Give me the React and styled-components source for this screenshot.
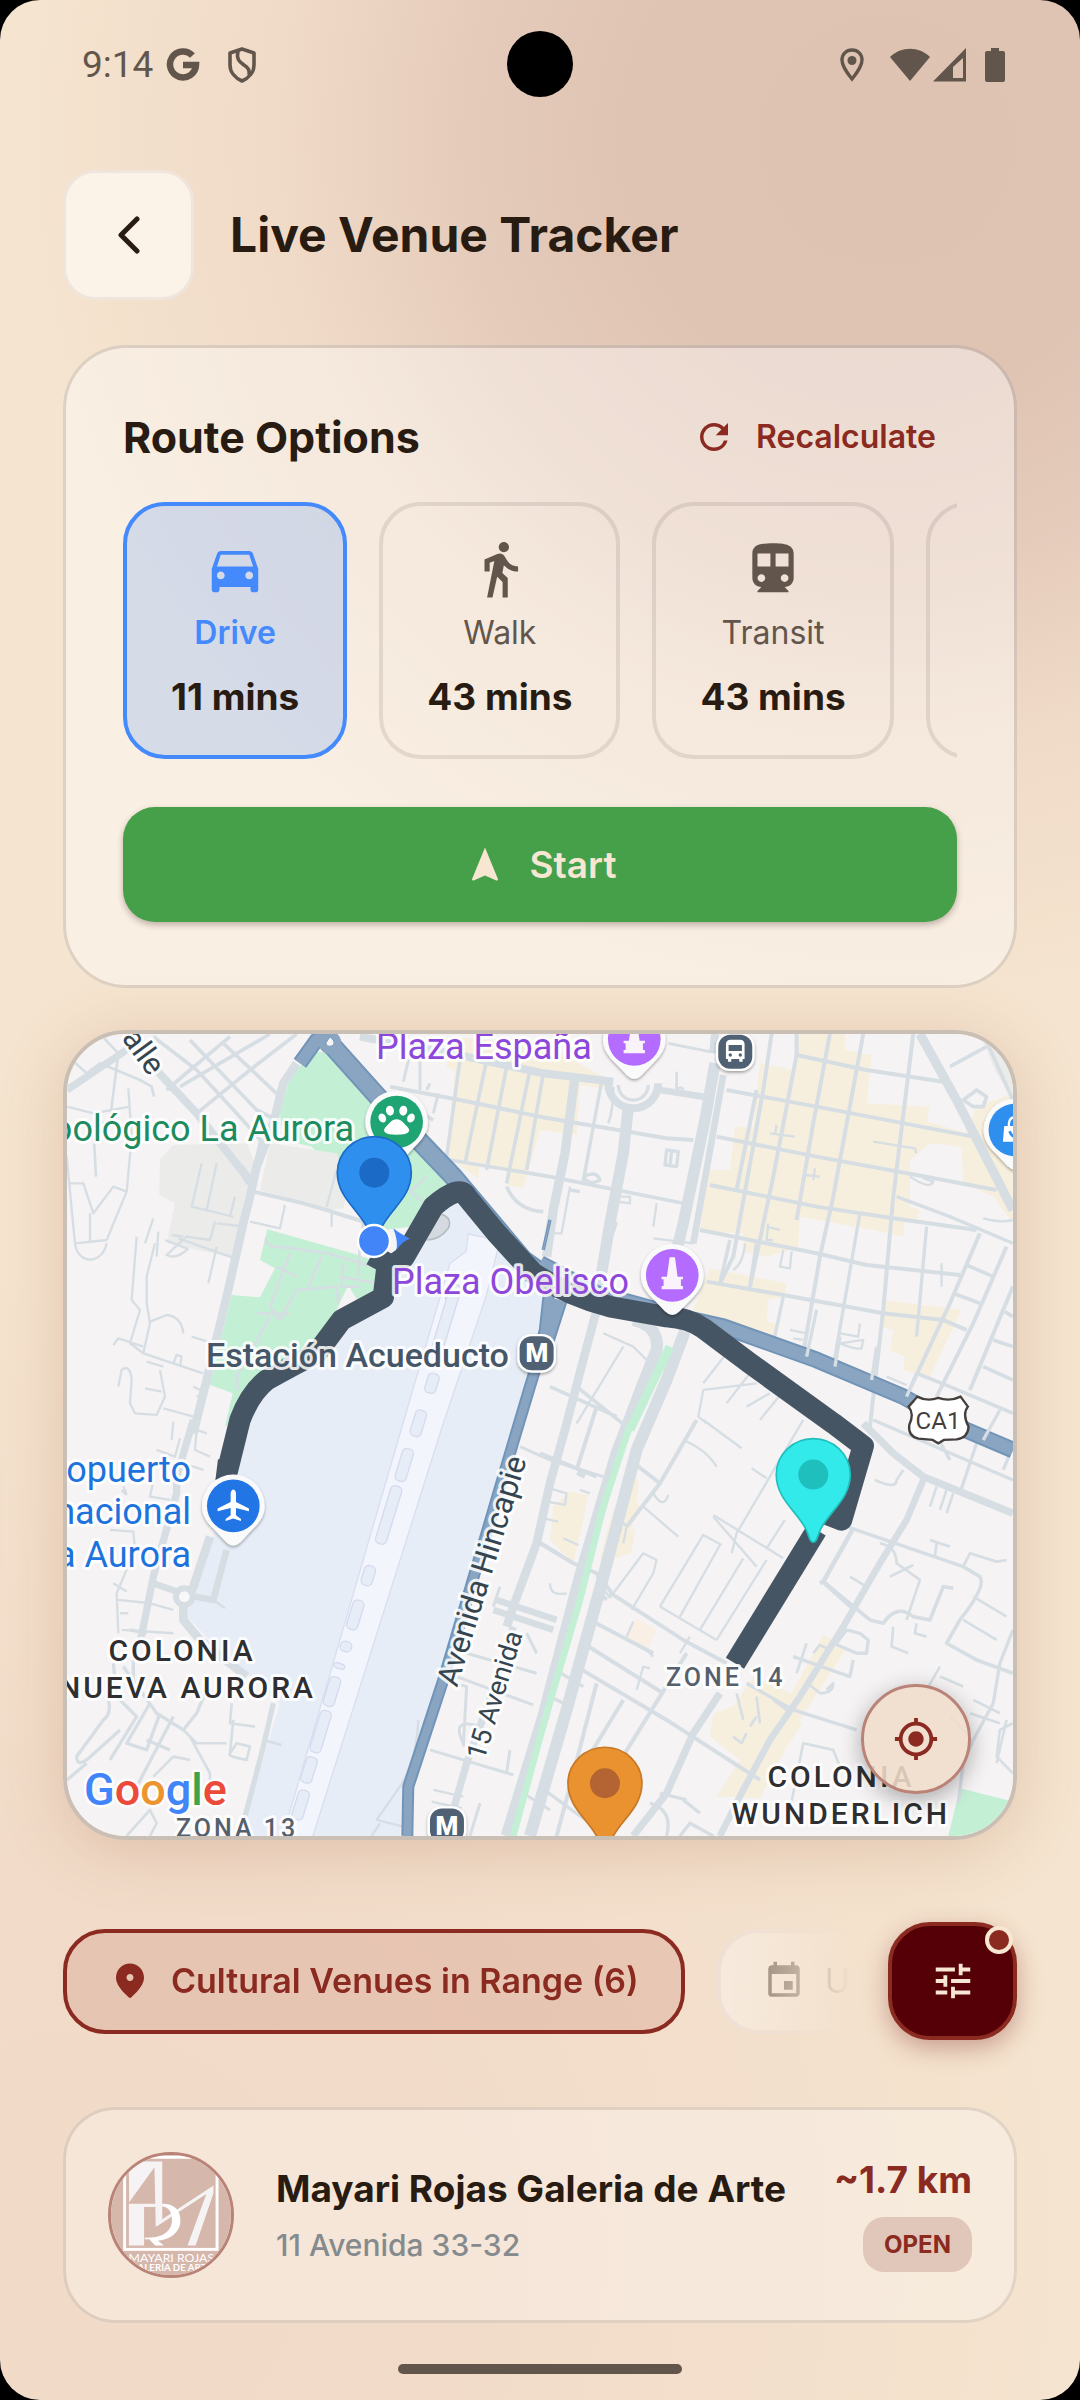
import React, { useState } from 'react';
import styled, { createGlobalStyle, css } from 'styled-components';
import {
  MdDirectionsCar,
  MdDirectionsWalk,
  MdDirectionsTransit,
  MdDirectionsBike,
  MdNavigation,
  MdRefresh,
  MdEvent,
  MdTune,
  MdMyLocation,
} from 'react-icons/md';

const modes = [
  { id: 'drive', label: 'Drive', time: '11 mins', Icon: MdDirectionsCar },
  { id: 'walk', label: 'Walk', time: '43 mins', Icon: MdDirectionsWalk },
  { id: 'transit', label: 'Transit', time: '43 mins', Icon: MdDirectionsTransit },
  { id: 'bike', label: '', time: '', Icon: MdDirectionsBike },
];

export default function App() {
  const [mode, setMode] = useState('drive');

  return (
    <>
      <GlobalStyle />
      <Screen>
        <StatusBar />
        <Content>
          <Header>
            <BackButton type="button" aria-label="Back">
              <svg width="22" height="38" viewBox="0 0 22 38">
                <path d="M19 3 L3 19 L19 35" fill="none" stroke="currentColor" strokeWidth="5" strokeLinecap="round" strokeLinejoin="round" />
              </svg>
            </BackButton>
            <Title>Live Venue Tracker</Title>
          </Header>

          <RouteCard>
            <CardHead>
              <CardTitle>Route Options</CardTitle>
              <TextButton type="button">
                <MdRefresh size={42} />
                Recalculate
              </TextButton>
            </CardHead>
            <Modes>
              {modes.map(({ id, label, time, Icon }) => (
                <Mode key={id} type="button" aria-label={label || id} $active={id === mode} onClick={() => setMode(id)}>
                  <Icon size={62} />
                  <ModeLabel $active={id === mode}>{label}</ModeLabel>
                  <ModeTime>{time}</ModeTime>
                </Mode>
              ))}
            </Modes>
            <StartButton type="button">
              <MdNavigation size={42} />
              Start
            </StartButton>
          </RouteCard>

          <MapCard>
            <VenueMap />
            <LocateButton type="button" aria-label="My location">
              <MdMyLocation size={46} />
            </LocateButton>
          </MapCard>

          <FilterRow>
            <Chips>
              <Chip type="button" $active>
                <PlaceIcon />
                Cultural Venues in Range (6)
              </Chip>
              <Chip type="button">
                <MdEvent size={42} />
                Upcoming
              </Chip>
            </Chips>
            <FilterButton type="button" aria-label="Filters">
              <MdTune size={46} />
              <FilterDot />
            </FilterButton>
          </FilterRow>

          <VenueCard>
            <Avatar>
              <VenueLogo />
            </Avatar>
            <VenueText>
              <VenueName>Mayari Rojas Galeria de Arte</VenueName>
              <VenueAddress>11 Avenida 33-32</VenueAddress>
            </VenueText>
            <VenueSide>
              <Distance>~1.7 km</Distance>
              <Badge>OPEN</Badge>
            </VenueSide>
          </VenueCard>
        </Content>
        <HomeBar />
      </Screen>
    </>
  );
}

function StatusBar() {
  return (
    <StatusRow>
      <StatusGroup>
        <Clock>9:14</Clock>
        <StatusIcon width="34" height="34" viewBox="0 0 34 34" $left={13}>
          <path d="M26.500 7.500 A13 13 0 1 0 30 17 H17" fill="none" stroke="currentColor" strokeWidth="6.500" />
        </StatusIcon>
        <StatusIcon width="30" height="36" viewBox="0 0 30 36" $left={27}>
          <path d="M15 2 L27 6 V18 C27 25 22 31 15 34 C8 31 3 25 3 18 V6 Z" fill="none" stroke="currentColor" strokeWidth="3.600" strokeLinejoin="round" />
          <path d="M11 4 C9 13 13 15 17 18 C22 21 23 24 22 28" fill="none" stroke="currentColor" strokeWidth="3.600" />
        </StatusIcon>
      </StatusGroup>
      <Camera />
      <StatusGroup>
        <StatusIcon width="24" height="34" viewBox="0 0 24 34">
          <path d="M12 2 C6 2 2 6.500 2 12 C2 19 12 31 12 31 C12 31 22 19 22 12 C22 6.500 18 2 12 2 Z" fill="none" stroke="currentColor" strokeWidth="3.400" />
          <circle cx="12" cy="12.500" r="4.500" fill="currentColor" />
        </StatusIcon>
        <StatusIcon width="40" height="34" viewBox="0 0 40 34" $left={26}>
          <path d="M0 9 C11 -2 29 -2 40 9 L20 33 Z" fill="currentColor" />
        </StatusIcon>
        <StatusIcon width="33" height="34" viewBox="0 0 33 34" $left={3}>
          <path d="M33 0 V33.500 H0 Z M30 10 L20 19 V30 H30 Z" fill="currentColor" fillRule="evenodd" />
        </StatusIcon>
        <StatusIcon width="20" height="34" viewBox="0 0 20 34" $left={19}>
          <path d="M6 0 H14 V3 H18 Q20 3 20 5 V32 Q20 34 18 34 H2 Q0 34 0 32 V5 Q0 3 2 3 H6 Z" fill="currentColor" />
        </StatusIcon>
      </StatusGroup>
    </StatusRow>
  );
}

const PlaceIcon = () => (
  <svg width="42" height="42" viewBox="0 0 24 24" fill="currentColor">
    <path d="M12 2C7.800 2 4 5.220 4 10.200c0 3.180 2.450 6.920 7.340 11.230.38.33.95.33 1.330 0C17.550 17.120 20 13.380 20 10.200 20 5.220 16.200 2 12 2zm0 10c-1.100 0-2-.9-2-2s.9-2 2-2 2 .9 2 2-.9 2-2 2z" />
  </svg>
);

function VenueLogo() {
  return (
    <svg width="100%" height="100%" viewBox="58 72 370 370">
      <rect x="50" y="60" width="390" height="390" fill="#d6b7ac" />
      <rect x="100" y="79" width="285" height="284" fill="none" stroke="#fff" strokeWidth="9" />
      <path d="M113 92 H216 V270 L374 166 L374 190 L319 351 H294 L352 192 L196 294 L192 110 L114 218 Z" fill="#f6f3f5" />
      <path d="M113 222 H196 V232 H160 V351 H113 Z" fill="#f6f3f5" />
      <path d="M216 222 C252 222 272 240 272 274 C272 310 240 334 202 336 L221 351 H194 L176 332 H162 V327 C220 330 246 306 246 272 C246 246 234 232 216 231 Z" fill="#fff" />
      <text x="244" y="402" textAnchor="middle" fontFamily="Lato, sans-serif" fontSize="38" fill="#fff">MAYARI ROJAS</text>
      <text x="244" y="431" textAnchor="middle" fontFamily="Lato, sans-serif" fontWeight="700" fontSize="30" fill="#fff">GALERÍA DE ARTE</text>
    </svg>
  );
}

/* ---------- map ---------- */

const blocks = [
  // parks
  ['#c3f0d5', 'M795 125 L870 130 L1215 500 L1120 590 L1080 650 L1000 660 L880 500 L785 410 L700 390 L690 310 L720 200 Z'],
  ['#c3f0d5', 'M652 658 L925 735 L1005 765 L985 850 L920 868 L895 825 L862 895 L800 1010 L640 1090 L560 1180 L540 1240 L525 1250 L548 1150 L480 1125 L545 855 L630 862 L675 775 L630 750 Z'],
  // built-up
  ['#ebebea', 'M370 405 L590 400 L620 470 L555 745 L350 700 L375 580 L328 555 L330 450 Z'],
  ['#ebebea', 'M660 400 L860 430 L900 520 L880 595 L830 600 L630 540 Z'],
  ['#ebebea', 'M2790 72 L2889 72 L2889 270 L2840 190 Z'],
  // commerce
  ['#f7efdd', 'M1210 80 L1500 110 L1640 190 L1680 210 L1655 235 L1590 225 L1580 375 L1470 360 L1420 535 L1370 525 L1375 475 L1290 460 L1285 505 L1190 440 L1215 180 L1190 170 Z'],
  ['#f7efdd', 'M2245 72 L2385 72 L2385 120 L2465 135 L2450 280 L2640 290 L2630 335 L2720 360 L2745 370 L2780 290 L2889 250 L2889 640 L2830 560 L2740 520 L2735 410 L2640 400 L2580 450 L2580 590 L2610 600 L2600 630 L2565 630 L2560 680 L2470 660 L2250 620 L2245 710 L2150 740 L2085 725 L2080 670 L1950 665 L1975 480 L2040 480 L2055 350 L2110 355 L2130 160 L2235 180 Z'],
  ['#f7efdd', 'M1980 775 L2210 820 L2205 860 L2155 870 L2150 935 L2180 940 L2170 990 L2030 940 L1930 900 Z'],
  ['#f7efdd', 'M2500 870 L2735 900 L2640 1100 L2560 1080 L2565 1040 L2520 1020 L2530 960 L2490 950 Z'],
  ['#f7efdd', 'M1560 1445 L1615 1455 L1600 1530 L1570 1660 L1500 1590 L1510 1490 Z'],
  ['#f7efdd', 'M1740 1385 L1765 1410 L1760 1480 L1775 1490 L1740 1560 L1755 1555 L1745 1630 L1680 1650 L1650 1645 L1690 1500 Z'],
  ['#f7efdd', 'M2320 1875 L2390 1915 L2250 2130 L2255 2145 L2205 2220 L2130 2365 L2000 2360 L2070 2250 L1980 2180 L1990 2110 L2050 2090 L2110 2000 L2225 2050 Z'],
  ['#f9efe4', 'M1760 1825 L1820 1860 L1790 1925 L1720 1885 Z'],
  ['#c3f0d5', 'M2730 2335 L2889 2375 L2889 2478 L2695 2478 Z'],
  // airfield
  ['#e6edf7', 'M1225 560 L1490 850 L1400 1250 L1380 1330 L1160 2030 L1060 2340 L1050 2478 L570 2478 L690 2080 L620 2020 L480 1890 L410 1820 L430 1730 L560 1400 L600 1180 L850 950 L1000 860 L1060 740 Z'],
];

// [width, path]
const roads = [
  // north-west
  [22, 'M51 240 L215 130 L240 110'],
  [24, 'M310 170 L440 310 L570 475 L610 520'],
  [8, 'M60 145 L110 190 L150 160 L270 210 L305 230 L312 260 M150 72 L205 130 L180 330 L130 350 L138 500'],
  [11, 'M350 240 L420 180 L540 80 M390 230 L660 72 M440 310 L600 180 L740 72 M310 80 L440 180 L560 310 L640 400 M420 90 L620 300 L680 330 M520 100 L690 260'],
  [26, 'M740 160 L700 220 L670 340 L620 470 L600 560 L580 640 L530 860 L470 1110 L430 1270'],
  [24, 'M570 470 L600 520 M620 470 L640 390'],
  [7, 'M235 235 L245 380 L230 545 L170 690 L75 700 L50 440 M60 520 L100 520 L130 610 L190 530 L230 545 M75 700 C85 770 160 760 170 700 M120 700 L120 610'],
  [7, 'M51 290 L130 310 L240 290'],
  [7, 'M455 460 L425 590 L550 620 M500 460 L470 600 M555 560 L540 620 M345 690 L410 715 M365 675 L400 680 M385 685 L555 745 M495 635 L480 690 L410 680 L350 735 Q380 750 415 715 M500 640 L585 650 M500 710 L475 820'],
  [12, 'M610 545 L760 580 L830 600 L940 635 L940 700'],
  [7, 'M600 635 L690 655 L705 585 M845 610 L845 650 M830 590 L860 480'],
  [7, 'M260 680 L245 870 L270 900 L240 1000 L280 1030 M315 700 L290 800 L290 880 L300 940 L280 1030 L370 1060 L460 1090 M300 935 L350 915 Q395 920 400 970 M425 980 L490 1000 M190 1005 L205 985 L280 1010 M310 625 L285 700 M325 665 L320 740'],
  [7, 'M205 1130 L215 1080 Q240 1060 245 1110 L240 1180 L255 1210 L320 1215 L345 1160 L330 1080 M340 1195 L450 1225 M290 1055 L340 1070 M370 1060 L380 1035 L395 1040 L390 1070 M285 1135 L335 1145 M430 1130 L470 1150 L440 1160'],
  [8, 'M650 685 Q640 700 670 710 L730 715 L830 730 L970 770 M720 730 L660 890 L690 930 L740 840 L860 830 L865 880 M660 920 L560 1100 L565 1140 M620 910 L720 912 M815 740 L775 830 M680 770 L740 800 M870 800 L980 820 M880 760 L875 830 L930 830 M930 700 L925 800'],
  [7, 'M850 120 L890 170 M1080 545 L1130 500 M1080 545 L1140 590 L1150 640'],
  // centre-north grid
  [24, 'M930 80 L1250 140 L1480 190 L1690 215'],
  [12, 'M1020 230 L1230 270 L1470 320 L1850 385 L1930 390'],
  [11, 'M1200 450 L1500 500 L1900 580 M1150 330 L1100 300'],
  [11, 'M1310 150 L1245 460 M1370 170 L1310 480 M1440 180 L1370 520 M1480 190 L1430 480 M1230 150 L1190 440 M1370 530 Q1400 600 1480 605'],
  [9, 'M1090 90 L1060 215 M1110 100 L1110 240 M1165 250 L1150 310 M1140 220 L1130 240'],
  [28, 'M1575 200 L1545 430 L1510 600 L1490 740'],
  [10, 'M1655 215 L1600 510 M1630 350 L1600 515'],
  [34, 'M1735 290 L1720 430 L1680 640 L1650 820'],
  [24, 'M1675 220 A74 74 0 1 0 1825 220'],
  [10, 'M1705 225 A45 45 0 0 0 1795 225'],
  [20, 'M1830 240 L1960 260'],
  [8, 'M1690 230 Q1690 300 1675 340 M1880 185 L1880 240 Q1895 225 1900 240 M1855 100 L1980 125'],
  [34, 'M1995 160 L1965 330 L1900 640 L1880 720'],
  [20, 'M2020 195 L1975 450 L1930 700'],
  [24, 'M1990 130 L1995 72 M1650 820 L1640 900'],
  [10, 'M1850 420 L1885 425 L1880 470 L1845 465 Z M1865 425 L1860 465 M1590 545 L1560 540 M1600 500 Q1640 480 1650 510 Q1620 530 1600 500'],
  [7, 'M1690 560 L1740 560 L1740 580 L1700 575 M1820 580 L1810 650 M1560 530 L1535 670 L1505 670 M1690 630 L1700 640 L1680 700 M1810 685 L1930 700'],
  // north-east grid
  [12, 'M2165 72 L2140 240 L2050 740 L2010 820 M2240 72 L2240 135 L2170 500 L2100 830 M2120 240 L2060 540'],
  [12, 'M2340 72 L2290 340 L2240 630 M2440 72 L2350 560 L2310 740 L2260 1030 M2590 72 L2530 560 L2500 900 L2460 1250'],
  [12, 'M2240 135 L2450 180 L2680 215 M2030 240 L2300 290 L2770 380 M2000 380 L2300 440 L2600 495 L2840 540 M1980 525 L2300 590 L2530 625 L2780 660'],
  [12, 'M1950 660 L2300 730 L2450 765 L2730 795 M1970 815 L2200 855 L2500 910 L2680 930 L2750 960'],
  [10, 'M2540 560 L2700 620 L2889 700 M2430 610 L2350 1070 M2630 650 L2600 980 M2200 860 L2170 1000'],
  [28, 'M2610 72 L2720 270 L2889 600'],
  [11, 'M2700 170 L2810 110 M2800 72 L2889 270 M2740 270 L2780 240 L2810 260 L2800 290 L2770 290 Z'],
  [12, 'M2790 670 L2700 880 L2560 1180 M2870 710 L2770 940 L2660 1160 M2889 830 L2760 1140'],
  [11, 'M2750 765 L2830 800 M2710 850 L2790 880 M2680 930 L2750 960 M2865 905 L2889 920 M2830 990 L2889 1010 M2800 1070 L2889 1110 M2600 1090 L2700 1130 L2889 1210'],
  [7, 'M2160 370 L2235 380 M2180 345 L2175 375 M2265 495 L2310 500 M2295 475 L2290 510 M2470 395 L2595 415 L2600 430 M2580 500 Q2640 540 2650 515 L2620 505 M2150 650 L2190 660 M2155 640 L2150 690 L2170 690 M2200 720 L2190 770 L2220 775 L2225 725 M2085 700 Q2080 760 2050 780 M2675 760 L2675 830 M2220 960 L2270 970 M2230 985 L2260 990 M2370 970 L2425 980 L2430 940 M2370 1000 Q2420 1020 2435 1015 L2440 990 L2370 1000 M1660 970 L1750 1010 L1800 1060 M1580 1240 L1720 1010 M2800 625 Q2850 640 2889 630 M2510 1100 L2570 1125'],
  [11, 'M2040 690 L2010 820 M2120 700 L2100 830 M1500 1130 L1700 1220 M1580 1130 L1730 1250'],
  // south of the highway
  [26, 'M1640 900 L1600 1050 L1545 1260 L1500 1420 L1460 1600 L1390 1790 L1370 1850'],
  [36, 'M1750 930 Q1830 950 1820 1020 L1780 1120 L1700 1330 L1590 1700 L1480 2120 L1370 2478'],
  [36, 'M1910 950 L1850 1110 L1760 1320 L1660 1700 L1550 2100 L1440 2478'],
  [20, 'M1330 1800 L1510 1860 M1340 1770 L1520 1830'],
  [22, 'M1390 1850 L1340 2010 L1250 2260 L1210 2400'],
  [9, 'M1410 1310 L1500 1350 L1660 1400 M1460 1590 L1540 1640 M1250 1930 L1460 1990 M1220 2000 L1450 2085 M1140 2220 L1390 2295 M1180 2010 L1250 2030 L1240 2210 M1350 1730 L1330 1790 M1430 1870 L1460 1930 M1380 2220 L1370 2290 M1290 2380 L1260 2478 M1240 2200 Q1200 2120 1290 2150 M1420 2350 L1500 2400'],
  [7, 'M1105 2130 Q1100 2250 1050 2330 L980 2430 L1060 2450 M990 2440 L965 2478 M1150 2340 L1240 2360 M1145 2375 L1235 2395'],
  [7, 'M2120 1120 L1960 1140 L1945 1220 L1970 1240 M2030 1030 L1960 1120 M2100 1090 L2030 1180 M2160 1150 L2090 1190 M2130 1230 L2220 1120'],
  // south-west
  [26, 'M1600 1380 L1590 1400 M480 1580 L430 1730 L400 1790 L400 1830 L450 1890 L590 2000'],
  [20, 'M530 1620 L490 1770 L410 1755 L310 1720'],
  [22, 'M430 1230 L380 1400 L380 1450 L310 1700 L270 1900'],
  [16, 'M670 2080 L640 2210 L570 2478'],
  [7, 'M370 1235 L365 1290 M390 1285 L375 1340 L320 1320 M440 1260 L435 1320 L480 1340 M470 1270 L440 1260 M400 1360 L460 1380 M310 1415 L300 1460 L360 1470 M220 1430 Q240 1470 215 1440 M180 1560 L250 1565 L255 1620 L200 1750 L205 1870 M190 1720 L230 1745 M205 1770 L300 1780 L370 1800 M215 1860 L370 1870 M210 1810 L235 1810 M490 1770 L525 1795'],
  [10, 'M240 1860 L290 1870 M190 1960 L200 2060 L260 2120 L180 2250 M220 1970 L320 2110 L400 2160 L440 2110 L470 2040 M250 1950 L250 2010 M170 2050 Q190 2110 160 2130 L80 2240 Q80 2270 110 2250 L210 2160 M300 2080 L230 2200 L290 2220 L330 2110 M290 2190 L360 2220 M370 2120 L250 2350 M51 2310 L110 2260'],
  [8, 'M400 2160 L440 2200 L530 2200 M545 2080 L540 2140 L615 2150 M550 2130 L540 2230 Q530 2240 590 2250 L600 2210 L560 2200 L540 2230 M310 2300 L370 2240 L420 2250 M420 2180 L480 2290 L480 2330 M640 2190 L695 2205 M230 2478 L300 2400 L320 2440 L300 2478'],
  // south-east
  [12, 'M1470 1330 L1640 1400 M1580 1380 L1640 1190 M1740 1350 L1830 1420 L1730 1550 M1940 1230 L1830 1420 M1640 1740 L1670 1770 M1470 1600 L1570 1660 L1640 1690 L1690 1755 L1900 1890 L2030 1960'],
  [7, 'M1900 1290 Q1970 1320 2000 1370 M1960 1230 L2075 1315 M2105 1375 L2150 1405 M2260 1230 L2060 1570 L2045 1630 M1990 1515 L2200 1645 M2205 1530 L2150 1615 M1780 1490 L1885 1580 M1810 1450 Q1840 1500 1855 1455 M1690 1750 L1780 1630 L1820 1650 L1810 1690 L1745 1800 M1830 1790 L1960 1575 L2015 1605 M1890 1820 L2010 1605 M1950 1860 L2080 1645 M2000 1890 L2150 1650 M1830 1790 L2000 1890 M1990 1520 L2120 1670'],
  [7, 'M1500 1435 L1550 1450 L1545 1485 L1490 1475 M1480 1525 L1525 1535 M1540 1585 L1585 1605 M1700 1515 L1730 1550 L1720 1600 M1590 1440 L1620 1450 M1640 1700 Q1690 1790 1680 1750 M1500 1720 Q1500 1760 1550 1750 M1750 1835 L1730 1880 M1790 1920 L1810 1940 M1920 1880 L1890 1930 M1760 2040 L1780 1970 L1800 1975'],
  [12, 'M1600 1900 L1840 2050 M1580 1970 L1850 2130 L2130 2310 M1610 1920 L1590 1980 M1620 1830 L1810 1930 M1640 2020 L1560 2330 L1520 2478 M1720 2070 L1610 2250 L1590 2330 M1910 1930 L1830 2060 L1700 2270'],
  [22, 'M2010 2050 L1930 2170 L1850 2350 L1750 2478'],
  [14, 'M2410 1555 L2320 1715 L2310 1720 M2325 1720 L2415 1800'],
  [20, 'M2620 1410 L2570 1530 L2490 1660 L2380 1850 L2250 2060 L2160 2190 L2080 2340 L2010 2478'],
  [22, 'M2440 1240 L2530 1330 L2620 1400 L2889 1510'],
  [11, 'M2390 1550 L2740 1670 L2790 1700 Q2810 1730 2730 1830 L2690 1900 L2780 1950 L2889 1990 M2320 1715 L2460 1830 L2500 1840 Q2540 1780 2590 1820 L2640 1830 L2680 1730 L2710 1735'],
  [8, 'M2490 1600 Q2540 1610 2540 1660 L2610 1710 L2570 1830 M2520 1700 L2590 1665 M2640 1590 L2700 1610 M2660 1600 L2655 1640 M2740 1670 L2760 1630 L2840 1655 L2870 1650 M2600 1840 L2595 1870 L2630 1880 M2530 1850 L2525 1910 L2575 1930 M2740 1830 L2840 1890 M2770 1760 L2870 1820 M2475 1410 Q2540 1440 2540 1410 L2560 1380 M2660 1430 L2640 1490 M2690 1440 L2670 1500 M2710 1450 L2690 1510 M2400 1700 L2450 1730'],
  [10, 'M2889 1860 L2850 1960 L2830 2080 L2770 2190 L2740 2260 L2725 2380 M2360 1900 L2390 1860 L2430 1870 L2455 1890 L2450 1930 L2420 1930 L2350 1900 M2230 1940 L2400 2000 L2410 1950'],
  [8, 'M2270 1900 L2240 1990 M2290 1930 L2310 1905 L2340 1920 M2170 2070 L2210 2100 M2060 2050 L2080 2130 M2120 2120 L2100 2150 M2120 2060 L2130 2140 M2050 2180 L2075 2200 L2090 2170 M2280 2025 L2310 2050 Q2350 2050 2350 2020 L2330 2040 M2220 2400 L2260 2200 L2350 2220 L2370 2270 M2670 1970 L2630 2040 M2670 2000 L2740 2030 M2770 2070 L2850 2110 M2760 2110 L2850 2140 M2700 2120 L2760 2180 M2889 2140 L2850 2160 L2840 2240 L2889 2290 M2870 2130 L2840 2260'],
  [10, 'M2090 2020 L2230 2100 L2420 2160 M1830 2350 L1910 2370 M1900 2370 L1950 2410 M1800 2380 Q1870 2400 1850 2478 M1890 2478 L1920 2440 L1990 2478 M1500 1970 L1600 2030 M1480 2050 L1540 2080 M1470 2330 L1620 2440 M2860 1380 L2889 1310 M2700 1350 L2640 1240 M2470 1230 L2889 1410 M2780 1300 L2730 1450'],
];

const highways = [
  [60, 'M840 100 L1010 290 L1210 500 L1420 750 L1490 800'],
  [50, 'M1470 760 L1640 850 L1930 930 L2020 950 L2300 1050 L2560 1160 L2700 1240 L2889 1320'],
  [46, 'M850 90 L800 90 L750 160'],
  [36, 'M1500 820 L1480 1000 L1440 1130 L1395 1280 L1180 2010 L1075 2330 L1072 2478'],
  [56, 'M1525 870 L1480 1010'],
  [10, 'M1480 720 L1500 630'],
];

const route = [
  'M500 1380 L532 1384 L570 1230 Q600 1150 650 1110 Q740 1060 800 1030 L875 930 L1000 862 L1010 780 L1062 742 L1150 590 Q1230 520 1250 560 L1340 670 L1450 790 Q1560 860 1680 890 L1850 920 Q1920 925 1960 955 L2100 1060 L2350 1240 L2440 1308 L2375 1530 L2310 1505',
  'M965 735 L1020 765',
  'M2300 1560 L2055 1960',
];

// [x, y, length]
const pods = [
  [1208, 850, 60], [1188, 930, 220], [1146, 1120, 60], [1105, 1240, 80], [1063, 1365, 100],
  [1016, 1515, 180], [955, 1697, 60], [916, 1815, 90], [888, 1910, 30], [868, 1968, 16],
  [846, 2045, 90], [812, 2165, 130], [777, 2280, 80], [752, 2385, 90],
];

function PoiPin({ x, y, color, children }) {
  return (
    <g transform={`translate(${x} ${y})`}>
      <path d="M0 -94 A94 94 0 0 1 94 0 C94 30 78 50 60 68 L22 108 Q0 130 -22 108 L-60 68 C-78 50 -94 30 -94 0 A94 94 0 0 1 0 -94 Z" fill="#fbfafb" filter="url(#soft)" />
      <circle r="79" fill={color} />
      {children}
    </g>
  );
}

function DropPin({ x, y, fill, edge, dot }) {
  return (
    <g transform={`translate(${x} ${y})`}>
      <path d="M0 203 C-10 203 -11 190 -20 168 C-45 112 -111 75 -111 0 A111 108 0 1 1 111 0 C111 75 45 112 20 168 C11 190 10 203 0 203 Z" fill={fill} stroke={edge} strokeWidth="5" />
      <circle r="45" fill={dot} />
    </g>
  );
}

const Obelisk = () => (
  <path d="M-8 -54 H8 L16 4 H32 V12 H26 V32 H32 V42 H-32 V32 H-26 V12 H-32 V4 H-16 Z" fill="#fbf3fb" />
);

function StationBadge({ x, y, children }) {
  return (
    <g transform={`translate(${x} ${y})`}>
      <rect x="-58" y="-58" width="116" height="116" rx="42" fill="#fff" filter="url(#soft)" />
      <rect x="-51" y="-51" width="102" height="102" rx="36" fill="#4f6173" />
      {children}
    </g>
  );
}

function VenueMap() {
  return (
    <MapSvg viewBox="0 0 946 802" preserveAspectRatio="xMidYMid slice" role="img" aria-label="Map">
      <defs>
        <filter id="soft" x="-30%" y="-30%" width="160%" height="160%">
          <feDropShadow dx="0" dy="5" stdDeviation="5" floodColor="#000" floodOpacity="0.35" />
        </filter>
      </defs>
      <rect width="946" height="802" fill="#f5f3f4" />
      <g transform="translate(-17 -24) scale(0.3333)" fill="none" strokeLinejoin="round">
        {blocks.map(([fill, d]) => <path key={d} d={d} fill={fill} />)}

        <path d="M1255 672 L1350 692 L1308 860 L1180 1240 L785 2490 L695 2490 L1062 1230 L1200 760 L1248 725 Z" fill="#f3f5fd" stroke="#dadff0" strokeWidth="4" />
        {pods.map(([x, y, len]) => (
          <rect key={y} x={x - 17} y={y - len / 2} width="34" height={len} rx="13" fill="#e6edf7" stroke="#d6daee" strokeWidth="4" transform={`rotate(17 ${x} ${y})`} />
        ))}

        {roads.map(([w, d]) => <path key={d} d={d} stroke="#d6dee4" strokeWidth={w} />)}
        <path d="M1860 1010 L1740 1260" stroke="#c3f0d5" strokeWidth="26" />
        <path d="M1742 1240 L1660 1490 L1590 1770 L1490 2110 L1390 2478" stroke="#c3f0d5" strokeWidth="20" />

        {highways.map(([w, d]) => <path key={d} d={d} stroke="#7194b8" strokeWidth={w} />)}
        {highways.map(([w, d]) => <path key={d} d={d} stroke="#8aa5c1" strokeWidth={Math.max(w - 12, 4)} />)}
        <circle cx="840" cy="98" r="34" fill="#8aa5c1" />
        <path d="M840 80 Q862 98 846 108 Q828 112 828 98 Z" fill="#f5f3f4" stroke="#7194b8" strokeWidth="3" />
        <path d="M2270 1040 L2300 900 M2355 1070 L2370 980 M2465 1110 L2480 1010 M2570 1160 L2600 1090 M2800 1290 L2850 1200" stroke="#d6dee4" strokeWidth="10" />
        <path d="M1165 610 Q1210 620 1195 655 Q1170 690 1130 690" fill="#d4dadf" stroke="#b5bdc0" strokeWidth="5" />
        <circle cx="403" cy="1760" r="34" fill="#d6dee4" />
        <circle cx="403" cy="1760" r="16" fill="#f8f8f8" />

        {route.map((d) => <path key={d} d={d} stroke="#465564" strokeWidth="64" />)}
      </g>

      <MapLabel x="54" y="4" $size={31} $color="#34454f" transform="rotate(54 54 4)">alle</MapLabel>
      <MapLabel x="287" y="107" textAnchor="end" $size={36} $color="#1c8b60">Zoológico La Aurora</MapLabel>
      <MapLabel x="309" y="25" $size={36} $color="#8e47dc">Plaza España</MapLabel>
      <MapLabel x="325" y="260" $size={36} $color="#8e47dc">Plaza Obelisco</MapLabel>
      <MapLabel x="139" y="333" $size={34} $strong $color="#465669">Estación Acueducto</MapLabel>
      <MapLabel x="124" y="448" textAnchor="end" $size={36} $color="#1d73de">Aeropuerto</MapLabel>
      <MapLabel x="124" y="490" textAnchor="end" $size={36} $color="#1d73de">Internacional</MapLabel>
      <MapLabel x="124" y="533" textAnchor="end" $size={36} $color="#1d73de">La Aurora</MapLabel>
      <MapLabel x="390" y="654" $size={31} $color="#34454f" transform="rotate(-73 390 654)">Avenida Hincapie</MapLabel>
      <MapLabel x="417" y="727" $size={27} $color="#34454f" transform="rotate(-73 417 727)">15 Avenida</MapLabel>
      <AreaLabel x="115" y="627" textAnchor="middle" $size={30} $strong $color="#2f2f31">COLONIA</AreaLabel>
      <AreaLabel x="249" y="664" textAnchor="end" $size={30} $strong $color="#2f2f31">NUEVA AURORA</AreaLabel>
      <AreaLabel x="109" y="803" $size={25} $strong $color="#56606c">ZONA 13</AreaLabel>
      <AreaLabel x="599" y="652" $size={25} $strong $color="#56606c">ZONE 14</AreaLabel>
      <AreaLabel x="774" y="753" textAnchor="middle" $size={30} $strong $color="#2f2f31">COLONIA</AreaLabel>
      <AreaLabel x="774" y="790" textAnchor="middle" $size={30} $strong $color="#2f2f31">WUNDERLICH</AreaLabel>

      <g transform="translate(-17 -24) scale(0.3333)">
        <StationBadge x={1460} y={1030} />
        <StationBadge x={1191} y={2447} />
        <StationBadge x={2056} y={125}>
          <path d="M-28 -22 Q-28 -36 -14 -36 H14 Q28 -36 28 -22 V22 H22 V30 H12 V22 H-12 V30 H-22 V22 H-28 Z M-20 -20 V-2 H20 V-20 Z" fill="#fff" fillRule="evenodd" />
          <circle cx="-15" cy="10" r="5" fill="#4f6173" />
          <circle cx="15" cy="10" r="5" fill="#4f6173" />
        </StationBadge>

        <PoiPin x={1040} y={336} color="#1fa574">
          <g fill="#fff">
            <ellipse cx="-43" cy="-12" rx="11" ry="14" transform="rotate(-25 -43 -12)" />
            <ellipse cx="-20" cy="-34" rx="12" ry="15" transform="rotate(-8 -20 -34)" />
            <ellipse cx="20" cy="-34" rx="12" ry="15" transform="rotate(8 20 -34)" />
            <ellipse cx="43" cy="-12" rx="11" ry="14" transform="rotate(25 43 -12)" />
            <path d="M0 -8 C16 -8 20 4 32 14 C46 28 34 38 0 38 C-34 38 -46 28 -32 14 C-20 4 -16 -8 0 -8 Z" />
          </g>
        </PoiPin>
        <PoiPin x={1753} y={88} color="#b46bff"><Obelisk /></PoiPin>
        <PoiPin x={1867} y={796} color="#b46bff"><Obelisk /></PoiPin>
        <PoiPin x={550} y={1488} color="#2275e4">
          <path d="M0 -49 Q8 -47 8 -36 V-12 L47 8 V16 L8 6 V28 L23 39 V45 L0 38 L-23 45 V39 L-8 28 V6 L-47 16 V8 L-8 -12 V-36 Q-8 -47 0 -49 Z" fill="#fff" />
        </PoiPin>
        <PoiPin x={2895} y={360} color="#2f8fee">
          <path d="M-36 35 L-32 -12 H32 L36 35 Z" fill="#fff" />
          <path d="M-18 -8 V-20 Q-16 -38 0 -38 Q16 -38 18 -20 V-8" fill="none" stroke="#fff" strokeWidth="7" />
          <path d="M-16 4 Q-10 20 0 20" fill="none" stroke="#2f8fee" strokeWidth="8" />
        </PoiPin>

        <DropPin x={973} y={488} fill="#2f8fee" edge="#1b6ac6" dot="#1b6ac6" />
        <DropPin x={2290} y={1394} fill="#33eaea" edge="#1fbfbd" dot="#1fbfbd" />
        <DropPin x={1665} y={2320} fill="#ea922f" edge="#c87724" dot="#b36432" />

        <path d="M1030 655 Q1048 670 1080 686 Q1055 695 1040 720 Q1044 690 1030 655 Z" fill="#4285f8" />
        <circle cx="972" cy="693" r="48" fill="#4285f8" stroke="#fff" strokeWidth="7" />

        <path d="M2592 1172 L2602 1160 Q2632 1176 2665 1164 Q2700 1176 2732 1160 L2754 1190 Q2736 1212 2756 1250 Q2754 1284 2720 1288 L2682 1290 L2665 1300 L2648 1290 L2606 1286 Q2574 1280 2578 1245 Q2594 1212 2576 1190 Z" fill="#fff" stroke="#443f3c" strokeWidth="7" />
      </g>
      <MetroLetter x="470" y="328">M</MetroLetter>
      <MetroLetter x="380" y="801">M</MetroLetter>
      <MapLabel x="871" y="395" textAnchor="middle" $size={24} $color="#443f3c">CA1</MapLabel>

      <MapBrand x="17" y="771">
        <tspan fill="#4285f8">G</tspan>
        <tspan fill="#ec4b3b">o</tspan>
        <tspan fill="#ec952f">o</tspan>
        <tspan fill="#4285f8">g</tspan>
        <tspan fill="#3fa34d">l</tspan>
        <tspan fill="#ec4b3b">e</tspan>
      </MapBrand>
    </MapSvg>
  );
}

/* ---------- styles ---------- */

const GlobalStyle = createGlobalStyle`
  * {
    box-sizing: border-box;
  }
  body {
    margin: 0;
    background: #000;
    font-family: Inter, sans-serif;
    color: #281b12;
  }
  button {
    font: inherit;
    color: inherit;
    background: none;
    border: 0;
    padding: 0;
    margin: 0;
    cursor: pointer;
  }
  svg {
    display: block;
    flex-shrink: 0;
  }
`

const Screen = styled.div`
  display: flex;
  flex-direction: column;
  min-height: 100vh;
  overflow: hidden;
  border-radius: 40px;
  background:
    radial-gradient(circle 860px at 82% 140px, #dec2b2 0, #dfc4b4 30%, rgba(228, 201, 185, 0.9) 50%, rgba(236, 212, 194, 0.6) 70%, rgba(245, 228, 207, 0) 100%),
    radial-gradient(circle 1000px at 8% 2250px, #f1dbc8 0, rgba(241, 219, 200, 0.9) 40%, rgba(245, 228, 207, 0) 100%),
    #f5e4cf;
`

const StatusRow = styled.div`
  position: relative;
  display: flex;
  align-items: center;
  justify-content: space-between;
  height: 130px;
  padding: 0 75px 0 82px;
  color: #62564c;
`

const StatusGroup = styled.div`
  display: flex;
  align-items: center;
`

const StatusIcon = styled.svg`
  margin-left: ${props => props.$left || 0}px;
`

const Clock = styled.span`
  font-family: Roboto, sans-serif;
  font-size: 37px;
  line-height: 44px;
`

const Camera = styled.div`
  width: 66px;
  height: 66px;
  border-radius: 50%;
  background: #000;
  position: absolute;
  left: 50%;
  top: 31px;
  margin-left: -33px;
`

const Content = styled.main`
  flex: 1;
  padding: 40px 63px 0;
`

const Header = styled.header`
  display: flex;
  align-items: center;
  gap: 36px;
  margin-bottom: 45px;
`

const BackButton = styled.button`
  display: flex;
  align-items: center;
  justify-content: center;
  width: 131px;
  height: 130px;
  border: 3px solid #efe5dc;
  border-radius: 32px;
  background: #fbf3e8;
`

const Title = styled.h1`
  margin: 0;
  font-size: 48px;
  line-height: 56px;
  font-weight: 700;
`

const RouteCard = styled.section`
  padding: 56px 57px 63px;
  border: 3px solid rgba(125, 135, 150, 0.2);
  border-radius: 63px;
  background: rgba(255, 255, 255, 0.4);
  background-clip: padding-box;
`

const CardHead = styled.div`
  display: flex;
  align-items: center;
  justify-content: space-between;
  height: 66px;
  margin-bottom: 32px;
`

const CardTitle = styled.h2`
  margin: 0;
  font-size: 43px;
  line-height: 52px;
  font-weight: 700;
`

const TextButton = styled.button`
  display: flex;
  align-items: center;
  gap: 21px;
  padding: 0 21px;
  font-size: 32px;
  line-height: 42px;
  font-weight: 600;
  color: #8a2a20;
`

const Modes = styled.div`
  display: flex;
  gap: 32px;
  overflow: hidden;
`

const Mode = styled.button`
  flex-shrink: 0;
  display: flex;
  flex-direction: column;
  align-items: center;
  min-height: 257px;
  padding: 32px 44px;
  border: 4px solid rgba(98, 86, 76, 0.14);
  border-radius: 42px;
  color: #62564c;
  ${props => props.$active && css`
    border-color: #448afd;
    background: rgba(68, 138, 253, 0.2);
    color: #448afd;
  `}
`

const ModeLabel = styled.span`
  margin: 12px 0 21px;
  font-size: 32px;
  line-height: 42px;
  font-weight: ${props => props.$active ? 600 : 400};
`

const ModeTime = styled.span`
  font-size: 37px;
  line-height: 44px;
  font-weight: 700;
  color: #281b12;
`

const StartButton = styled.button`
  display: flex;
  align-items: center;
  justify-content: center;
  gap: 24px;
  width: 100%;
  height: 115px;
  margin-top: 48px;
  border-radius: 32px;
  background: #45a049;
  color: #f6e6d2;
  font-size: 37px;
  line-height: 44px;
  font-weight: 600;
  box-shadow: 0 3px 6px rgba(60, 30, 30, 0.3);
`

const MapCard = styled.section`
  position: relative;
  margin-top: 42px;
  overflow: hidden;
  border: 4px solid #cabfb5;
  border-radius: 63px;
  box-shadow: 0 10px 64px rgba(160, 90, 60, 0.22);
`

const MapSvg = styled.svg`
  width: 100%;
`

const MapLabel = styled.text`
  font-family: Roboto, sans-serif;
  font-size: ${props => props.$size}px;
  font-weight: ${props => props.$strong ? 500 : 400};
  fill: ${props => props.$color};
  stroke: rgba(255, 255, 255, 0.85);
  stroke-width: 6px;
  stroke-linejoin: round;
  paint-order: stroke;
`

const AreaLabel = styled(MapLabel)`
  letter-spacing: 3px;
`

const MetroLetter = styled.text`
  font-family: Roboto, sans-serif;
  font-size: 26px;
  font-weight: 900;
  text-anchor: middle;
  fill: #fff;
`

const MapBrand = styled.text`
  font-family: Roboto, sans-serif;
  font-size: 45px;
  font-weight: 500;
  stroke: rgba(255, 255, 255, 0.9);
  stroke-width: 5px;
  stroke-linejoin: round;
  paint-order: stroke;
`

const LocateButton = styled.button`
  position: absolute;
  right: 42px;
  bottom: 42px;
  display: flex;
  align-items: center;
  justify-content: center;
  width: 110px;
  height: 110px;
  border: 3px solid #b98378;
  border-radius: 50%;
  background: rgba(240, 220, 202, 0.88);
  color: #8a2a20;
  box-shadow: 0 6px 22px rgba(0, 0, 0, 0.3);
`

const FilterRow = styled.div`
  display: flex;
  align-items: center;
  gap: 21px;
  margin-top: 82px;
`

const Chips = styled.div`
  flex: 1;
  min-width: 0;
  display: flex;
  gap: 32px;
  overflow: hidden;
  mask-image: linear-gradient(to right, #000 79%, transparent 98%);
`

const Chip = styled.button`
  flex-shrink: 0;
  display: flex;
  align-items: center;
  gap: 20px;
  height: 105px;
  padding: 0 42px;
  border: 4px solid ${props => props.$active ? '#8a2a20' : '#eee0d8'};
  border-radius: 42px;
  background: ${props => props.$active ? 'rgba(190, 105, 90, 0.2)' : 'rgba(255, 255, 255, 0.4)'};
  color: ${props => props.$active ? '#8a2a20' : '#62564c'};
  font-size: 34px;
  line-height: 42px;
  font-weight: ${props => props.$active ? 600 : 400};
  white-space: nowrap;
`

const FilterButton = styled.button`
  position: relative;
  display: flex;
  align-items: center;
  justify-content: center;
  width: 129px;
  height: 118px;
  border: 4px solid #8a2a20;
  border-radius: 42px;
  background: #550006;
  color: #f6e6d2;
  box-shadow: 0 8px 24px rgba(120, 30, 30, 0.35);
`

const FilterDot = styled.span`
  position: absolute;
  top: 0;
  right: 0;
  width: 28px;
  height: 28px;
  border: 4px solid #f6e6d2;
  border-radius: 50%;
  background: #8a2a20;
`

const VenueCard = styled.article`
  display: flex;
  align-items: center;
  gap: 42px;
  margin-top: 67px;
  padding: 42px;
  border: 3px solid rgba(125, 135, 150, 0.16);
  border-radius: 52px;
  background: rgba(255, 255, 255, 0.3);
  background-clip: padding-box;
`

const Avatar = styled.div`
  flex-shrink: 0;
  width: 126px;
  height: 126px;
  overflow: hidden;
  border: 3px solid #b98378;
  border-radius: 50%;
`

const VenueText = styled.div`
  flex: 1;
  min-width: 0;
`

const VenueName = styled.h3`
  margin: 0 0 16px;
  font-size: 37px;
  line-height: 44px;
  font-weight: 700;
  white-space: nowrap;
`

const VenueAddress = styled.p`
  margin: 0;
  font-size: 30px;
  line-height: 36px;
  font-weight: 500;
  color: #858a8e;
`

const VenueSide = styled.div`
  display: flex;
  flex-direction: column;
  align-items: flex-end;
  gap: 15px;
`

const Distance = styled.span`
  font-size: 37px;
  line-height: 44px;
  font-weight: 700;
  color: #8a2a20;
`

const Badge = styled.span`
  padding: 12px 21px;
  border-radius: 21px;
  background: #e1c7b9;
  color: #8a2a20;
  font-size: 24px;
  line-height: 31px;
  font-weight: 700;
`

const HomeBar = styled.div`
  width: 284px;
  height: 10px;
  margin: 41px auto 26px;
  border-radius: 5px;
  background: #62564c;
`
